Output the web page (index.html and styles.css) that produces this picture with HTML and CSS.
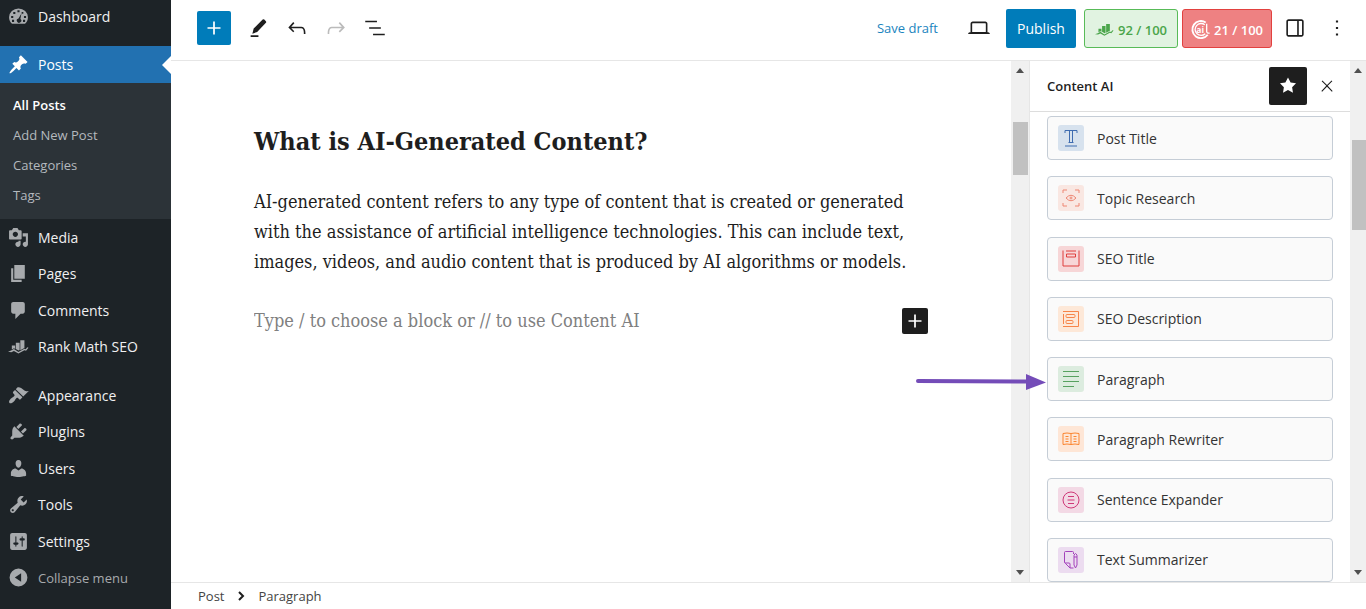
FILE: index.html
```html
<!DOCTYPE html>
<html lang="en">
<head>
    <meta charset="UTF-8">
    <meta name="viewport" content="width=device-width, initial-scale=1.0">
    <title>Edit Post</title>
    <link rel="stylesheet" href="styles.css">
</head>
<body>
    <!-- shared by the admin menu and the SEO score -->
    <svg class="symbols" aria-hidden="true">
        <symbol id="rank-math" viewBox="0 0 22 20">
            <path d="M4 9h3.500v3.500l-1.200-.6-2.300 1.300zM8.200 6h4v7.700l-1 .5-3-1.700zM12.900 3.500h4.300v8l-4.300 2.300z"/>
            <path d="M0 15.500l3.200-1.200 3-1.600 4.700 3 6.200-3.300 1.400.6 1.700-2.200 1.300.5-2.600 3.100-1.700-.5-6.300 3.400-4.700-2.600-2.700 1.200z"/>
        </symbol>
    </svg>

    <aside class="sidebar">
        <nav class="menu">
            <a class="menu-item first" href="#">
                <svg viewBox="0 0 20 20"><path fill-rule="evenodd" d="M3.800 17h12.400c1.700-1.500 2.800-3.700 2.800-6.200A9 8.500 0 0 0 1 10.800C1 13.300 2.100 15.500 3.800 17zM9 4h2v2H9zM5 5.700h2v2H5zM13 5.700h1.600v1.600H13zM3 9.500h2v2H3zM15.200 9.500h2v2h-2zM3.800 13.200h2v2h-2zM14.300 13.200h2v2h-2zM12.800 7.200l-1 5.100a2.100 2.100 0 1 1-1.800-.4z"/></svg>
                Dashboard
            </a>
            <a class="menu-item current" href="#">
                <svg viewBox="0 0 20 20"><path d="M10.440 3.020l1.820-1.820 6.360 6.350-1.830 1.820c-1.050-.68-2.480-.57-3.410.36l-.75.75c-.92.93-1.040 2.350-.35 3.410l-1.830 1.820-2.410-2.410-2.800 2.790c-.42.42-3.380 2.710-3.800 2.290s1.860-3.390 2.280-3.810l2.790-2.790L4.100 9.360l1.830-1.820c1.050.69 2.480.57 3.400-.36l.75-.75c.93-.92 1.050-2.350.36-3.410z"/></svg>
                Posts
            </a>
            <div class="submenu">
                <a class="active" href="#">All Posts</a>
                <a href="#">Add New Post</a>
                <a href="#">Categories</a>
                <a href="#">Tags</a>
            </div>
            <div class="menu-group content">
                <a class="menu-item" href="#">
                    <svg viewBox="0 0 20 20"><path d="M13 11V4c0-.55-.45-1-1-1h-1.670L9 1H5L3.670 3H2c-.55 0-1 .45-1 1v7c0 .55.45 1 1 1h10c.55 0 1-.45 1-1zM7 4.500c1.380 0 2.500 1.120 2.500 2.500S8.380 9.500 7 9.500 4.500 8.380 4.500 7 5.620 4.500 7 4.500zM14 6h5v10.500c0 1.380-1.120 2.500-2.500 2.500S14 17.880 14 16.500s1.120-2.500 2.500-2.500c.17 0 .34.02.5.05V9h-3V6zm-4 8.050V13h2v3.500c0 1.380-1.120 2.500-2.500 2.500S7 17.880 7 16.500 8.120 14 9.500 14c.17 0 .34.02.5.05z"/></svg>
                    Media
                </a>
                <a class="menu-item" href="#">
                    <svg viewBox="0 0 20 20"><path d="M6 15V2h10v13H6zm-1 1h8v2H3V5h2v11z"/></svg>
                    Pages
                </a>
                <a class="menu-item" href="#">
                    <svg viewBox="0 0 20 20"><path d="M5 2h9c1.100 0 2 .9 2 2v7c0 1.100-.9 2-2 2h-2l-5 5v-5H5c-1.100 0-2-.9-2-2V4c0-1.100.9-2 2-2z"/></svg>
                    Comments
                </a>
                <a class="menu-item" href="#">
                    <svg><use href="#rank-math"/></svg>
                    Rank Math SEO
                </a>
            </div>
            <div class="menu-group admin">
                <a class="menu-item" href="#">
                    <svg viewBox="0 0 20 20"><path d="M14.480 11.060L7.410 3.990l1.500-1.500c.5-.56 2.300-.47 3.510.32 1.210.8 1.430 1.280 2.910 2.100 1.180.64 2.450 1.260 4.450.85zm-.71.71L6.700 4.700 4.930 6.470c-.39.39-.39 1.020 0 1.410l1.060 1.060c.39.39.39 1.030 0 1.420-.6.6-1.430 1.110-2.210 1.690-.35.26-.7.53-1.010.84C1.430 14.230.4 16.080 1.400 17.070c.99 1 2.840-.03 4.180-1.360.31-.31.58-.66.85-1.020.57-.78 1.080-1.610 1.690-2.210.39-.39 1.020-.39 1.410 0l1.060 1.060c.39.39 1.020.39 1.410 0z"/></svg>
                    Appearance
                </a>
                <a class="menu-item" href="#">
                    <svg viewBox="0 0 20 20"><path d="M13.110 4.360L9.870 7.600 8 5.730l3.240-3.240c.35-.34 1.050-.2 1.560.32.52.51.66 1.210.31 1.550zm-8 1.770l.91-1.120 9.010 9.010-1.190.84c-.71.71-2.630 1.160-3.820 1.160H6.140L4.900 17.260c-.59.59-1.540.59-2.120 0-.59-.58-.59-1.530 0-2.120l1.240-1.240v-3.880c0-1.130.4-3.190 1.090-3.890zm7.260 3.970l3.240-3.240c.34-.35 1.040-.21 1.550.31.52.51.66 1.210.31 1.550l-3.240 3.250z"/></svg>
                    Plugins
                </a>
                <a class="menu-item" href="#">
                    <svg viewBox="0 0 20 20"><path d="M10 9.250c-2.270 0-2.730-3.440-2.730-3.440C7 4.020 7.820 2 9.970 2c2.160 0 2.980 2.020 2.710 3.810 0 0-.41 3.440-2.680 3.440zm0 2.570L12.720 10c2.390 0 4.520 2.330 4.520 4.530v2.490s-3.650 1.130-7.240 1.130c-3.650 0-7.240-1.130-7.240-1.130v-2.490c0-2.250 1.940-4.480 4.470-4.480z"/></svg>
                    Users
                </a>
                <a class="menu-item" href="#">
                    <svg viewBox="0 0 20 20"><path d="M16.680 9.770c-1.340 1.340-3.300 1.670-4.950.99l-5.410 6.520c-.99.99-2.590.99-3.580 0s-.99-2.590 0-3.570l6.520-5.420c-.68-1.650-.35-3.610.99-4.950 1.280-1.280 3.120-1.620 4.720-1.060l-2.890 2.890 2.820 2.820 2.860-2.870c.53 1.580.18 3.390-1.080 4.650zM3.810 16.210c.4.39 1.040.39 1.430 0 .4-.4.4-1.040 0-1.430-.39-.4-1.030-.4-1.430 0-.39.39-.39 1.030 0 1.430z"/></svg>
                    Tools
                </a>
                <a class="menu-item" href="#">
                    <svg viewBox="0 0 20 20"><path d="M18 16V4c0-1.100-.9-2-2-2H4c-1.100 0-2 .9-2 2v12c0 1.100.9 2 2 2h12c1.100 0 2-.9 2-2zM8 11h1c.55 0 1 .45 1 1s-.45 1-1 1H8v1.500c0 .28-.22.5-.5.5s-.5-.22-.5-.5V13H6c-.55 0-1-.45-1-1s.45-1 1-1h1V5.500c0-.28.22-.5.5-.5s.5.22.5.5V11zm5-2h-1c-.55 0-1-.45-1-1s.45-1 1-1h1V5.500c0-.28.22-.5.5-.5s.5.22.5.5V7h1c.55 0 1 .45 1 1s-.45 1-1 1h-1v5.500c0 .28-.22.5-.5.5s-.5-.22-.5-.5V9z"/></svg>
                    Settings
                </a>
                <button class="menu-item collapse" type="button">
                    <svg viewBox="0 0 20 20"><path fill-rule="evenodd" d="M10 1.500a8.500 8.500 0 1 0 0 17 8.500 8.500 0 0 0 0-17zM12.500 6v8L6.500 10z"/></svg>
                    Collapse menu
                </button>
            </div>
        </nav>
    </aside>

    <div class="editor">
        <header class="topbar">
            <button class="add-block" type="button" aria-label="Add block">
                <svg viewBox="0 0 24 24"><path d="M18 11.200h-5.200V6h-1.600v5.200H6v1.600h5.200V18h1.600v-5.200H18z"/></svg>
            </button>
            <div class="tools">
                <button class="icon-button" type="button" aria-label="Tools">
                    <svg viewBox="0 0 24 24"><path d="M16.300 4.200q.8-.6 1.500 0l1.500 1.500q.6.700 0 1.500L11.200 15.800 6.800 17.200l1.200-4.700zM5.200 18.700h7.200v1.600H5.200z"/></svg>
                </button>
                <button class="icon-button" type="button" aria-label="Undo">
                    <svg viewBox="0 0 24 24"><path d="M18.300 11.700c-.6-.6-1.400-.9-2.300-.9H6.700l2.900-3.300-1.100-1-4.500 5L8.500 16l1-1-2.700-2.700H16c.5 0 .9.2 1.300.5 1 1 1 3.400 1 4.500v.3h1.500v-.2c0-1.500 0-4.300-1.500-5.700z"/></svg>
                </button>
                <button class="icon-button" type="button" aria-label="Redo" disabled>
                    <svg viewBox="0 0 24 24"><path d="M15.600 6.500l-1.100 1 2.900 3.300H8c-.9 0-1.700.3-2.300.9-1.400 1.500-1.400 4.200-1.400 5.600v.2h1.500v-.3c0-1.100 0-3.500 1-4.500.3-.3.7-.5 1.300-.5h9.200L14.500 15l1.100 1.100 4.600-4.600-4.600-5z"/></svg>
                </button>
                <button class="icon-button" type="button" aria-label="Document overview">
                    <svg viewBox="0 0 24 24"><path d="M13.800 5.200H3v1.500h10.800V5.200zm-3.600 12v1.500H21v-1.500H10.200zm7.200-6H6.600v1.500h10.800v-1.500z"/></svg>
                </button>
            </div>
            <div class="actions">
                <button class="save-draft" type="button">Save draft</button>
                <button class="icon-button" type="button" aria-label="Preview">
                    <svg viewBox="0 0 24 24"><path d="M20.500 16h-.7V8c0-1.100-.9-2-2-2H6.200c-1.100 0-2 .9-2 2v8h-.7c-.8 0-1.500.7-1.500 1.500h20c0-.8-.7-1.500-1.500-1.500zM5.700 8c0-.3.2-.5.5-.5h11.600c.3 0 .5.2.5.5v7.600H5.700V8z"/></svg>
                </button>
                <button class="publish" type="button">Publish</button>
                <button class="score good" type="button">
                    <svg><use href="#rank-math"/></svg>
                    92 / 100
                </button>
                <button class="score bad" type="button">
                    <svg class="ai-icon" viewBox="0 0 20 20" aria-hidden="true">
                        <path d="M15.500 2.600A9 9 0 1 0 17.600 15.500" fill="none" stroke="currentColor" stroke-width="2"/>
                        <path d="M14.500 5A6.300 6.300 0 1 0 15 14.500M16.500 4v8.500a2 2 0 0 0 3 1" fill="none" stroke="currentColor" stroke-width="1.400"/>
                        <text x="5.500" y="13.500">ai</text>
                    </svg>
                    21 / 100
                </button>
                <button class="icon-button" type="button" aria-label="Settings">
                    <svg viewBox="0 0 24 24"><path d="M18 4H6c-1.100 0-2 .9-2 2v12c0 1.100.9 2 2 2h12c1.100 0 2-.9 2-2V6c0-1.100-.9-2-2-2zm-4 14.500H6c-.3 0-.5-.2-.5-.5V6c0-.3.2-.5.5-.5h8v13zm4.500-.5c0 .3-.2.5-.5.5h-2.500v-13H18c.3 0 .5.2.5.5v12z"/></svg>
                </button>
                <button class="icon-button" type="button" aria-label="Options">
                    <svg viewBox="0 0 24 24"><path d="M13 19h-2v-2h2v2zm0-6h-2v-2h2v2zm0-6h-2V5h2v2z"/></svg>
                </button>
            </div>
        </header>

        <div class="workspace">
            <main class="canvas">
                <article class="post">
                    <h2>What is AI-Generated Content?</h2>
                    <p>AI-generated content refers to any type of content that is created or generated with the assistance of artificial intelligence technologies. This can include text, images, videos, and audio content that is produced by AI algorithms or models.</p>
                    <div class="new-block">
                        <input type="text" aria-label="New block" placeholder="Type / to choose a block or // to use Content AI">
                        <button class="inserter" type="button" aria-label="Add block">
                            <svg viewBox="0 0 24 24"><path d="M18 11.200h-5.200V6h-1.600v5.200H6v1.600h5.200V18h1.600v-5.200H18z"/></svg>
                        </button>
                    </div>
                </article>
            </main>
            <div class="scrollbar canvas-bar"><i class="up"></i><div class="thumb"></div><i class="down"></i></div>

            <aside class="panel">
                <div class="panel-header">
                    <h3>Content AI</h3>
                    <button class="pin" type="button" aria-label="Unpin from toolbar">
                        <svg viewBox="0 0 24 24"><path d="M12 4.100l2.400 4.700 5 .7-3.600 3.600.8 5.100-4.600-2.400-4.600 2.400.8-5.100-3.600-3.600 5-.7z"/></svg>
                    </button>
                    <button class="close" type="button" aria-label="Close">
                        <svg viewBox="0 0 24 24"><path d="M13 11.800l6.100-6.300-1-1-6.100 6.200-6.100-6.200-1 1 6.100 6.300-6.500 6.700 1 1 6.500-6.600 6.500 6.600 1-1z"/></svg>
                    </button>
                </div>
                <div class="ai-tools">
                    <button class="ai-tool" type="button">
                        <svg class="navy" viewBox="0 0 26 26"><path d="M7 8V5.500h12V8M11.500 5.500v12M14.500 5.500v12M10.500 17.500h5M7 21h12"/></svg>
                        Post Title
                    </button>
                    <button class="ai-tool" type="button">
                        <svg class="coral" viewBox="0 0 26 26"><path d="M5 8V5h4M17 5h4v3M5 18v3h4M17 21h4v-3M8 13q5-5.500 10 0q-5 5.500-10 0z"/><circle cx="13" cy="13" r="1"/></svg>
                        Topic Research
                    </button>
                    <button class="ai-tool" type="button">
                        <svg class="red" viewBox="0 0 26 26"><path d="M5 4.500v15.500h16V4.500M8 5h10M8.500 8h9v3h-9z"/></svg>
                        SEO Title
                    </button>
                    <button class="ai-tool" type="button">
                        <svg class="orange" viewBox="0 0 26 26"><path d="M5 5.500h15.500v15H5M5.500 8v10"/><rect x="8" y="8.500" width="9" height="3" rx="1"/><rect x="8" y="14.500" width="7" height="3" rx="1"/></svg>
                        SEO Description
                    </button>
                    <button class="ai-tool" type="button">
                        <svg class="green" viewBox="0 0 26 26"><path d="M5 5.500h16M5 10.500h16M5 15.500h16M5 20.500h11"/></svg>
                        Paragraph
                        <svg class="pointer" viewBox="0 0 130 16" aria-hidden="true"><path class="line" d="M2 7l110 .5"/><path class="head" d="M110 0l20 8.500-20 7.500z"/></svg>
                    </button>
                    <button class="ai-tool" type="button">
                        <svg class="amber" viewBox="0 0 26 26"><path d="M5 7.500q4-1 8 0q4-1 8 0v11q-4-1-8 0q-4-1-8 0zM13 7.500v11M7.500 10.500h3M7.500 13h3M7.500 15.500h3M15.500 10.500h3M15.500 13h3M15.500 15.500h3"/></svg>
                        Paragraph Rewriter
                    </button>
                    <button class="ai-tool" type="button">
                        <svg class="pink" viewBox="0 0 26 26"><circle cx="13" cy="13" r="8"/><path d="M10 9.500h6M9.500 13h7M10 16.500h6"/></svg>
                        Sentence Expander
                    </button>
                    <button class="ai-tool" type="button">
                        <svg class="purple" viewBox="0 0 26 26"><path d="M15.500 7V5.500q0-1-1-1h-7q-1 0-1 1V15q0 1 1 1.500l4.500 4.500h3.500M7 16h4q1 0 1 1v4M16 8.500q1.500-4 3 0V18l-1.500 3-1.500-3zM16 10h3"/></svg>
                        Text Summarizer
                    </button>
                </div>
            </aside>
            <div class="scrollbar panel-bar"><i class="up"></i><div class="thumb"></div><i class="down"></i></div>
        </div>

        <footer class="breadcrumb">
            <a href="#">Post</a>
            <svg viewBox="0 0 8 10" aria-hidden="true"><path d="M2 1l4 4-4 4"/></svg>
            <a href="#">Paragraph</a>
        </footer>
    </div>
</body>
</html>
```
FILE: styles.css
```css
* {
    box-sizing: border-box;
}
body {
    margin: 0;
    height: 100vh;
    display: flex;
    overflow: hidden;
    font-family: "Open Sans", "Noto Sans", sans-serif;
    font-size: 14px;
    color: #1e1e1e;
    background: #fff;
}
button {
    font: inherit;
    color: inherit;
    padding: 0;
    border: none;
    background: none;
    cursor: pointer;
}
a {
    color: inherit;
    text-decoration: none;
}
svg {
    fill: currentColor;
    flex: none;
}
.symbols {
    position: absolute;
    width: 0;
    height: 0;
}

/* admin menu */
.sidebar {
    width: 171px;
    flex: none;
    background: #1d2327;
    color: #f0f0f1;
}
.menu-item {
    display: flex;
    align-items: center;
    gap: 9px;
    width: 100%;
    height: 37px;
    padding-left: 8px;
    text-align: left;
    white-space: nowrap;
}
.menu-item svg {
    width: 21px;
    height: 21px;
    color: #a7aaad;
}
.menu-item.first {
    height: 46px;
    padding-bottom: 14px;
}
.menu-item.current {
    position: relative;
    background: #2271b1;
    color: #fff;
}
.menu-item.current svg {
    color: #fff;
}
.menu-item.current::after {
    content: "";
    position: absolute;
    right: 0;
    top: 10px;
    border: 9px solid transparent;
    border-left-width: 0;
    border-right-color: #fff;
}
.submenu {
    display: flex;
    flex-direction: column;
    padding: 7px 0 9px 13px;
    background: #2c3338;
    color: #b4b9be;
    font-size: 13px;
    line-height: 30px;
}
.submenu .active {
    color: #fff;
    font-weight: 600;
}
.menu-group {
    display: grid;
    grid-auto-rows: 1fr;
}
.menu-group .menu-item {
    height: auto;
}
.menu-group.content {
    height: 146px;
}
.menu-group.admin {
    height: 219px;
    margin-top: 12px;
}
.menu-item.collapse {
    color: #a7aaad;
    font-size: 13px;
}

/* top bar */
.editor {
    flex: 1;
    min-width: 0;
    display: flex;
    flex-direction: column;
}
.topbar {
    display: flex;
    align-items: center;
    height: 61px;
    padding: 0 10px 4px 26px;
    border-bottom: 1px solid #e6e6e6;
}
.topbar svg {
    width: 26px;
    height: 26px;
}
.add-block {
    display: grid;
    place-items: center;
    width: 34px;
    height: 34px;
    border-radius: 2px;
    background: #007cba;
    color: #fff;
}
.tools {
    display: flex;
    gap: 1px;
    margin-left: 8px;
}
.icon-button {
    display: grid;
    place-items: center;
    width: 38px;
    height: 38px;
}
.icon-button:disabled {
    color: #bbb;
}
.actions {
    display: flex;
    align-items: center;
    gap: 4px;
    margin-left: auto;
}
.save-draft {
    margin-right: 18px;
    color: #1a84be;
    font-size: 13px;
}
.publish {
    width: 70px;
    height: 39px;
    margin: 0 4px;
    border-radius: 2px;
    background: #007cba;
    color: #fff;
}
.score {
    display: flex;
    align-items: center;
    justify-content: center;
    gap: 4px;
    width: 94px;
    height: 39px;
    padding-top: 3px;
    border: 1px solid;
    border-radius: 3px;
    font-size: 13px;
    font-weight: 600;
    white-space: nowrap;
}
.topbar .score svg {
    width: 19px;
    height: 19px;
    overflow: visible;
}
.score.good {
    border-color: #58bb58;
    background: #e1f3e1;
    color: #4aa54a;
}
.score.bad {
    width: 90px;
    border-color: #e2413f;
    background: #ee8182;
    color: #fff;
}
.ai-icon text {
    font-size: 9px;
    font-weight: 700;
}

/* canvas */
.workspace {
    flex: 1;
    min-height: 0;
    display: flex;
}
.canvas {
    flex: 1;
    min-width: 0;
    padding: 0 83px;
}
.post {
    max-width: 674px;
    font-family: "DejaVu Serif Condensed", "Liberation Serif", serif;
    font-size: 18px;
    line-height: 30px;
}
.post h2 {
    margin: 64px 0 28px;
    font-size: 25px;
    line-height: 34px;
}
.post p {
    margin: 0 0 29px;
}
.new-block {
    display: flex;
    align-items: center;
    gap: 8px;
}
.new-block input {
    flex: 1;
    min-width: 0;
    height: 30px;
    padding: 0;
    border: none;
    outline: none;
    font: inherit;
    background: none;
}
.new-block input::placeholder {
    color: #808080;
}
.inserter {
    display: grid;
    place-items: center;
    width: 26px;
    height: 26px;
    border-radius: 2px;
    background: #1e1e1e;
    color: #fff;
}
.inserter svg {
    width: 26px;
    height: 26px;
}

/* scrollbars */
.scrollbar {
    display: flex;
    flex-direction: column;
    align-items: center;
    width: 18px;
    padding: 7px 0;
    background: #f0f0f0;
}
.scrollbar i {
    border: 4px solid transparent;
}
.scrollbar .up {
    border-top-width: 0;
    border-bottom: 5px solid #505050;
}
.scrollbar .down {
    margin-top: auto;
    border-bottom-width: 0;
    border-top: 5px solid #505050;
}
.thumb {
    width: 15px;
    height: 53px;
    margin-top: 49px;
    background: #c1c1c1;
}
.panel-bar {
    width: 16px;
}
.panel-bar .thumb {
    width: 14px;
    height: 90px;
    margin-top: 67px;
    align-self: flex-end;
}

/* Content AI panel */
.panel {
    width: 321px;
    display: flex;
    flex-direction: column;
    border-left: 1px solid #e6e6e6;
}
.panel-header {
    display: flex;
    align-items: center;
    height: 51px;
    padding: 0 10px 0 17px;
    border-bottom: 1px solid #ddd;
}
.panel-header h3 {
    margin: 0;
    font-size: 13px;
    font-weight: 600;
}
.pin,
.close {
    display: grid;
    place-items: center;
    width: 38px;
    height: 38px;
}
.pin {
    margin-left: auto;
    border-radius: 2px;
    background: #1e1e1e;
    color: #fff;
}
.close {
    width: 26px;
    margin-left: 7px;
}
.pin svg {
    width: 26px;
    height: 26px;
}
.close svg {
    width: 18px;
    height: 18px;
}
.ai-tools {
    flex: 1;
    min-height: 0;
    display: flex;
    flex-direction: column;
    justify-content: space-between;
    padding: 4px 17px 0;
}
.ai-tool {
    position: relative;
    display: flex;
    align-items: center;
    gap: 13px;
    height: 44px;
    padding-left: 10px;
    border: 1px solid #c5cdd6;
    border-radius: 4px;
    background: #fafafa;
    color: #333;
}
.ai-tool svg {
    width: 26px;
    height: 26px;
    border-radius: 3px;
    fill: none;
    stroke: currentColor;
}
.navy {
    background: #d7e2ee;
    color: #3f6cb0;
}
.coral {
    background: #f9e7e2;
    color: #ee8673;
}
.red {
    background: #f7d6d7;
    color: #df3f3c;
}
.orange {
    background: #fde8d8;
    color: #f78549;
}
.green {
    background: #dcecdf;
    color: #57a160;
}
.amber {
    background: #fee6d6;
    color: #fb8530;
}
.pink {
    background: #f3d9e5;
    color: #cf3878;
}
.purple {
    background: #ecdcf0;
    color: #a341bb;
}
/* arrow that calls out the Paragraph tool */
.ai-tool .pointer {
    position: absolute;
    right: 100%;
    top: 16px;
    width: 130px;
    height: 16px;
    margin-right: 2px;
    border-radius: 0;
    color: #744cb8;
}
.pointer .line {
    stroke-width: 4;
    stroke-linecap: round;
}
.pointer .head {
    fill: currentColor;
    stroke: none;
}

/* footer */
.breadcrumb {
    display: flex;
    align-items: center;
    gap: 13px;
    height: 27px;
    padding-left: 27px;
    border-top: 1px solid #e6e6e6;
    font-size: 13px;
    color: #444;
}
.breadcrumb svg {
    width: 8px;
    height: 10px;
    fill: none;
    stroke: #1e1e1e;
    stroke-width: 2;
}
```
